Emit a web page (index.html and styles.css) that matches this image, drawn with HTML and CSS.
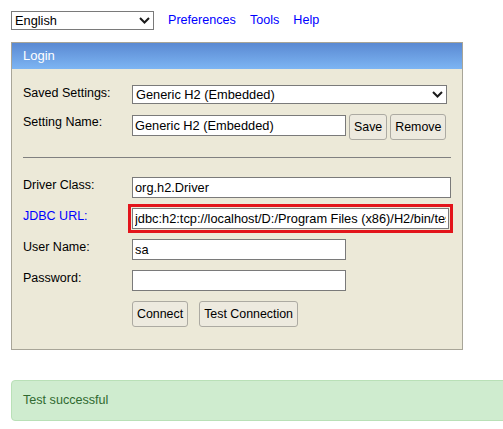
FILE: index.html
```html
<!DOCTYPE html>
<html lang="en">
<head>
<meta charset="utf-8">
<title>H2 Console</title>
<link rel="stylesheet" href="styles.css">
</head>
<body>
  <div class="topbar">
    <span class="select-wrap lang">
      <select class="select"><option>English</option></select>
      <svg class="chev" width="11" height="7" viewBox="0 0 11 7"><path d="M1 1 L5.5 5.5 L10 1" fill="none" stroke="#1b1b1b" stroke-width="2"/></svg>
    </span>
    <nav class="links">
      <a href="#">Preferences</a>
      <a href="#">Tools</a>
      <a href="#">Help</a>
    </nav>
  </div>

  <div class="panel">
    <div class="panel-head">Login</div>
    <div class="panel-body">
      <div class="form form-top">
        <label class="lbl">Saved Settings:</label>
        <span class="select-wrap saved">
          <select class="select"><option>Generic H2 (Embedded)</option></select>
          <svg class="chev" width="11" height="7" viewBox="0 0 11 7"><path d="M1 1 L5.5 5.5 L10 1" fill="none" stroke="#1b1b1b" stroke-width="2"/></svg>
        </span>
        <label class="lbl">Setting Name:</label>
        <div class="inline">
          <input class="field short" type="text" value="Generic H2 (Embedded)">
          <button class="btn">Save</button>
          <button class="btn">Remove</button>
        </div>
      </div>
      <hr class="sep">
      <div class="form form-main">
        <label class="lbl">Driver Class:</label>
        <input class="field wide" type="text" value="org.h2.Driver">
        <a class="lbl link" href="#">JDBC URL:</a>
        <input class="field url marked" type="text" value="jdbc:h2:tcp://localhost/D:/Program Files (x86)/H2/bin/test">
        <label class="lbl">User Name:</label>
        <input class="field short" type="text" value="sa">
        <label class="lbl">Password:</label>
        <input class="field short" type="password" value="">
        <span></span>
        <div class="actions">
          <button class="btn">Connect</button>
          <button class="btn">Test Connection</button>
        </div>
      </div>
    </div>
  </div>

  <div class="alert">Test successful</div>
</body>
</html>
```

FILE: styles.css
```css
html {
  overflow: hidden;
}

body {
  margin: 0;
  padding: 11px;
  font-family: "Liberation Sans", Arial, sans-serif;
  font-size: 12.5px;
  color: #000;
  background: #fff;
}

.topbar {
  display: flex;
  align-items: center;
  height: 19px;
}

.links {
  display: flex;
  gap: 14px;
  margin-left: 14px;
}

.links a {
  color: #0000ff;
  text-decoration: none;
  font-size: 12.6px;
  line-height: 15px;
}

.select-wrap {
  position: relative;
  display: inline-block;
  height: 19px;
}

.select-wrap.lang {
  width: 143px;
}

.select-wrap.saved {
  width: 315px;
}

.select {
  appearance: none;
  -webkit-appearance: none;
  width: 100%;
  height: 19px;
  box-sizing: border-box;
  margin: 0;
  padding: 0 0 0 3px;
  border: 1px solid #7a7a7a;
  border-radius: 0;
  background: #fff;
  font-family: "Liberation Sans", Arial, sans-serif;
  font-size: 12.8px;
  color: #000;
  line-height: 17px;
}

.chev {
  position: absolute;
  right: 4px;
  top: 6px;
  pointer-events: none;
}

.panel {
  width: 450px;
  margin-top: 12px;
  border: 1px solid #a8a598;
  background: #ece9d8;
}

.panel-head {
  height: 26px;
  line-height: 26px;
  padding: 0 11px;
  color: #fff;
  font-size: 13px;
  background: linear-gradient(#5a89d2, #7db5f3);
}

.panel-body {
  padding: 16px 11px 22px;
}

.form {
  display: grid;
  grid-template-columns: 109px 1fr;
  row-gap: 10px;
  align-items: start;
}

.lbl {
  font-size: 12.5px;
  line-height: 15px;
  padding-top: 1px;
  color: #000;
  text-decoration: none;
}

.lbl.link {
  color: #0000ff;
}

.inline {
  display: flex;
  align-items: flex-start;
  gap: 3px;
}

.inline .field {
  margin-top: 1px;
}

.field {
  height: 21px;
  box-sizing: border-box;
  margin: 0;
  padding: 0 2px;
  border: 1px solid #7a7a7a;
  background: #fff;
  font-family: "Liberation Sans", Arial, sans-serif;
  font-size: 12.8px;
  color: #000;
}

.field.short {
  width: 214px;
}

.field.wide {
  width: 319px;
}

.field.url {
  width: 317px;
}

.field.marked {
  outline: 3px solid #e3141b;
  outline-offset: 1px;
}

.btn {
  height: 26px;
  margin: 0;
  padding: 0 4px;
  border: 1px solid #acaaa2;
  border-radius: 3px;
  background: #edeadf;
  font-family: "Liberation Sans", Arial, sans-serif;
  font-size: 12.4px;
  color: #000;
}

.sep {
  margin: 17px 0 19px;
  height: 0;
  border: 0;
  border-top: 1px solid #808080;
}

.actions {
  display: flex;
  gap: 11px;
}

.alert {
  width: 540px;
  margin-top: 30px;
  padding: 12px 11px;
  line-height: 15px;
  border: 1px solid #b9e0b7;
  border-radius: 4px;
  background: #cfeccf;
  color: #2f6a30;
  font-size: 12.6px;
}
```
